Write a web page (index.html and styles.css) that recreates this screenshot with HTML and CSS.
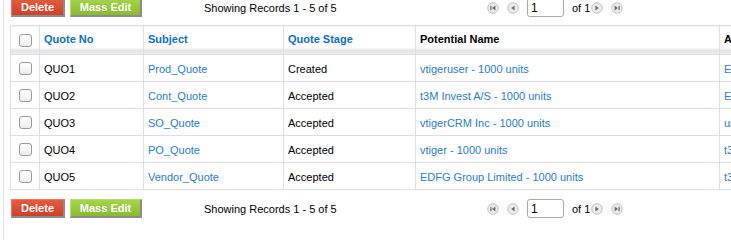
FILE: index.html
```html
<!DOCTYPE html>
<html lang="en">
<head>
    <meta charset="UTF-8">
    <title>Quotes</title>
    <link rel="stylesheet" href="styles.css">
</head>
<body>
    <div class="page">
        <div class="toolbar top">
            <div class="actions">
                <button class="btn delete">Delete</button>
                <button class="btn mass">Mass Edit</button>
            </div>
            <div class="records">Showing Records 1 - 5 of 5</div>
            <div class="pager">
                <svg class="nav" viewBox="0 0 12 12"><circle cx="6" cy="6" r="5.3"/><rect x="3.3" y="3.8" width="1.2" height="4.4"/><path d="M8.4 3.6 L5 6 L8.4 8.4 Z"/></svg>
                <svg class="nav" viewBox="0 0 12 12"><circle cx="6" cy="6" r="5.3"/><path d="M7.6 3.6 L4.2 6 L7.6 8.4 Z"/></svg>
                <input class="page-input" type="text" value="1">
                <span class="of">of 1</span>
                <svg class="nav" viewBox="0 0 12 12"><circle cx="6" cy="6" r="5.3"/><path d="M4.4 3.6 L7.8 6 L4.4 8.4 Z"/></svg>
                <svg class="nav" viewBox="0 0 12 12"><circle cx="6" cy="6" r="5.3"/><path d="M3.6 3.6 L7 6 L3.6 8.4 Z"/><rect x="7.5" y="3.8" width="1.2" height="4.4"/></svg>
            </div>
        </div>

        <table class="list">
            <colgroup>
                <col class="c-check">
                <col class="c-no">
                <col class="c-subject">
                <col class="c-stage">
                <col class="c-potential">
                <col class="c-account">
            </colgroup>
            <tr class="head">
                <th class="check"><input type="checkbox"></th>
                <th><a href="#">Quote No</a></th>
                <th><a href="#">Subject</a></th>
                <th><a href="#">Quote Stage</a></th>
                <th>Potential Name</th>
                <th>Account Name</th>
            </tr>
            <tr>
                <td class="check"><input type="checkbox"></td>
                <td>QUO1</td>
                <td><a href="#">Prod_Quote</a></td>
                <td>Created</td>
                <td><a href="#">vtigeruser - 1000 units</a></td>
                <td><a href="#">Electronics</a></td>
            </tr>
            <tr>
                <td class="check"><input type="checkbox"></td>
                <td>QUO2</td>
                <td><a href="#">Cont_Quote</a></td>
                <td>Accepted</td>
                <td><a href="#">t3M Invest A/S - 1000 units</a></td>
                <td><a href="#">Electronics</a></td>
            </tr>
            <tr>
                <td class="check"><input type="checkbox"></td>
                <td>QUO3</td>
                <td><a href="#">SO_Quote</a></td>
                <td>Accepted</td>
                <td><a href="#">vtigerCRM Inc - 1000 units</a></td>
                <td><a href="#">us</a></td>
            </tr>
            <tr>
                <td class="check"><input type="checkbox"></td>
                <td>QUO4</td>
                <td><a href="#">PO_Quote</a></td>
                <td>Accepted</td>
                <td><a href="#">vtiger - 1000 units</a></td>
                <td><a href="#">t3M</a></td>
            </tr>
            <tr>
                <td class="check"><input type="checkbox"></td>
                <td>QUO5</td>
                <td><a href="#">Vendor_Quote</a></td>
                <td>Accepted</td>
                <td><a href="#">EDFG Group Limited - 1000 units</a></td>
                <td><a href="#">t3M</a></td>
            </tr>
        </table>

        <div class="toolbar bottom">
            <div class="actions">
                <button class="btn delete">Delete</button>
                <button class="btn mass">Mass Edit</button>
            </div>
            <div class="records">Showing Records 1 - 5 of 5</div>
            <div class="pager">
                <svg class="nav" viewBox="0 0 12 12"><circle cx="6" cy="6" r="5.3"/><rect x="3.3" y="3.8" width="1.2" height="4.4"/><path d="M8.4 3.6 L5 6 L8.4 8.4 Z"/></svg>
                <svg class="nav" viewBox="0 0 12 12"><circle cx="6" cy="6" r="5.3"/><path d="M7.6 3.6 L4.2 6 L7.6 8.4 Z"/></svg>
                <input class="page-input" type="text" value="1">
                <span class="of">of 1</span>
                <svg class="nav" viewBox="0 0 12 12"><circle cx="6" cy="6" r="5.3"/><path d="M4.4 3.6 L7.8 6 L4.4 8.4 Z"/></svg>
                <svg class="nav" viewBox="0 0 12 12"><circle cx="6" cy="6" r="5.3"/><path d="M3.6 3.6 L7 6 L3.6 8.4 Z"/><rect x="7.5" y="3.8" width="1.2" height="4.4"/></svg>
            </div>
        </div>
    </div>
</body>
</html>
```

FILE: styles.css
```css
body {
    margin: 0;
    font-family: "Liberation Sans", Arial, sans-serif;
    font-size: 11px;
    color: #000;
    background: #fff;
    overflow: hidden;
}
.page {
    margin-left: 3px;
    padding-left: 6px;
    border-left: 1px solid #e2e2e2;
    height: 242px;
}
.toolbar {
    display: grid;
    grid-template-columns: 194px 283px auto;
    align-items: center;
    height: 19px;
}
.toolbar.top {
    margin-top: -2px;
    margin-bottom: 8px;
}
.toolbar.bottom {
    margin-top: 9px;
}
.actions {
    display: flex;
    gap: 5px;
    padding-left: 1px;
    height: 19px;
}
.btn {
    font-family: inherit;
    font-size: 11px;
    font-weight: bold;
    color: #fff;
    height: 19px;
    padding: 0;
    border: 1px solid transparent;
    border-right: 2px solid #8c8c8c;
    border-bottom: 2px solid #8c8c8c;
    cursor: pointer;
    line-height: 14px;
}
.delete {
    width: 54px;
    background: linear-gradient(#e45d40, #cf3f28);
    border-top-color: #e87a60;
    border-left-color: #e87a60;
}
.mass {
    width: 72px;
    background: linear-gradient(#a4d44a, #88bc2e);
    border-top-color: #b8e070;
    border-left-color: #b8e070;
}
.records {
    padding-top: 1px;
}
.pager {
    display: flex;
    align-items: center;
}
.nav {
    width: 12px;
    height: 12px;
    margin-right: 8px;
}
.nav circle {
    fill: #ececec;
    stroke: #b4b4b4;
    stroke-width: 0.8;
}
.nav path,
.nav rect {
    fill: #6a6a6a;
}
.page-input {
    width: 37px;
    height: 19px;
    box-sizing: border-box;
    border: 1px solid #a8a8a8;
    border-radius: 3px;
    padding: 0 3px;
    font-family: inherit;
    font-size: 12px;
    margin-right: 8px;
}
.of {
    margin-right: 1px;
    font-size: 11px;
}
.list {
    border-collapse: collapse;
    table-layout: fixed;
    width: 860px;
    border: 1px solid #dcdcf4;
}
.c-check { width: 29px; }
.c-no { width: 104px; }
.c-subject { width: 140px; }
.c-stage { width: 132px; }
.c-potential { width: 304px; }
.c-account { width: 150px; }
.list th,
.list td {
    border: 1px solid #dcdcf4;
    height: 25px;
    padding: 0 4px;
    text-align: left;
    white-space: nowrap;
    overflow: hidden;
    font-size: 11px;
}
.list th {
    height: 26px;
    font-weight: bold;
    background: linear-gradient(#fff 0, #fff 76%, #e2e2e2 86%, #eeeeee 100%);
    padding-bottom: 2px;
}
.list td {
    padding-top: 1px;
}
.list th a {
    color: #0a6fc0;
    text-decoration: none;
}
.list td a {
    color: #2a7dc6;
    text-decoration: none;
}
.list .check {
    text-align: center;
    padding: 0;
}
.check input {
    appearance: none;
    margin: 0;
    width: 13px;
    height: 13px;
    vertical-align: middle;
    border: 1px solid #9a9a9a;
    border-radius: 3px;
    background: linear-gradient(#fff, #ededed);
}
```
